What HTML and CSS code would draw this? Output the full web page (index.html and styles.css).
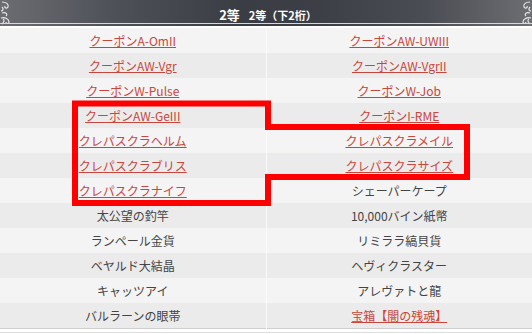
FILE: index.html
```html
<!DOCTYPE html>
<html lang="ja">
<head>
<meta charset="utf-8">
<title>2等</title>
<link rel="stylesheet" href="styles.css">
</head>
<body>
<div class="panel">
  <div class="head">
    <svg class="orn orn-left" width="16" height="26" viewBox="0 0 16 26">
      <path d="M2 2 C6 2 9 4 8 7 C7 9 4 8 5 6 M2 7 C4 9 3 11 1 11 M2 13 C6 12 8 14 6 16 M1 18 C5 17 9 19 9 22 C9 24 6 24 6 22 M2 24 C4 22 5 20 3 19" fill="none" stroke="#e8e8e8" stroke-width="1.2"/>
    </svg>
    <div class="title"><span class="main">2等</span><span class="sub">2等（下2桁）</span></div>
    <svg class="orn orn-right" width="16" height="26" viewBox="0 0 16 26">
      <path d="M14 2 C10 2 7 4 8 7 C9 9 12 8 11 6 M14 7 C12 9 13 11 15 11 M14 13 C10 12 8 14 10 16 M15 18 C11 17 7 19 7 22 C7 24 10 24 10 22 M14 24 C12 22 11 20 13 19" fill="none" stroke="#e8e8e8" stroke-width="1.2"/>
    </svg>
  </div>
  <table class="prizes">
    <tr><td><a href="#">クーポンA-OmII</a></td><td><a href="#">クーポンAW-UWIII</a></td></tr>
    <tr><td><a href="#">クーポンAW-Vgr</a></td><td><a href="#">クーポンAW-VgrII</a></td></tr>
    <tr><td><a href="#">クーポンW-Pulse</a></td><td><a href="#">クーポンW-Job</a></td></tr>
    <tr><td><a href="#">クーポンAW-GeIII</a></td><td><a href="#">クーポンI-RME</a></td></tr>
    <tr><td><a href="#">クレパスクラヘルム</a></td><td><a href="#">クレパスクラメイル</a></td></tr>
    <tr><td><a href="#">クレパスクラブリス</a></td><td><a href="#">クレパスクラサイズ</a></td></tr>
    <tr><td><a href="#">クレパスクラナイフ</a></td><td>シェーパーケープ</td></tr>
    <tr><td>太公望の釣竿</td><td>10,000バイン紙幣</td></tr>
    <tr><td>ランペール金貨</td><td>リミララ縞貝貨</td></tr>
    <tr><td>ベヤルド大結晶</td><td>ヘヴィクラスター</td></tr>
    <tr><td>キャッツアイ</td><td>アレヴァトと龍</td></tr>
    <tr><td>バルラーンの眼帯</td><td><a href="#">宝箱【闇の残魂】</a></td></tr>
  </table>
  <div class="foot"></div>
  <svg class="mark" width="532" height="334" viewBox="0 0 532 334">
    <polygon points="75,103.5 268,103.5 268,127 467,127 467,177 268,177 268,203 75,203" fill="none" stroke="#ff0000" stroke-width="6"/>
  </svg>
</div>
</body>
</html>
```
FILE: styles.css
```css
html, body {
  margin: 0;
  padding: 0;
  background: #ffffff;
}

.panel {
  position: relative;
  width: 532px;
  font-family: "Noto Sans CJK JP", "Noto Sans", sans-serif;
}

.head {
  position: relative;
  height: 26px;
  display: flex;
  align-items: center;
  justify-content: space-between;
  background: linear-gradient(90deg, #6c6d72 0%, #4e5058 22%, #3b3d45 45%, #3d3f47 60%, #4b4d54 80%, #6d6e72 100%);
}

.head::after {
  content: "";
  position: absolute;
  left: 0;
  right: 0;
  bottom: 2px;
  height: 1px;
  background: #d8d8d8;
}

.orn {
  display: block;
  flex: none;
}

.title {
  display: flex;
  align-items: baseline;
  gap: 9px;
  color: #ffffff;
  font-weight: bold;
  padding-top: 2px;
  padding-left: 4px;
}

.title .main {
  font-size: 13px;
}

.title .sub {
  font-size: 11px;
}

.prizes {
  width: 532px;
  margin-top: 2px;
  border-collapse: collapse;
  table-layout: fixed;
  font-size: 12px;
  color: #444444;
}

.prizes td {
  width: 50%;
  height: 25px;
  padding: 0;
  text-align: center;
  vertical-align: middle;
}

.prizes td + td {
  border-left: 1px solid #fafafa;
}

.prizes tr:nth-child(odd) {
  background: #f4f4f4;
}

.prizes tr:nth-child(even) {
  background: #ebebeb;
}

.prizes tr:last-child {
  border-bottom: 1px solid #cfcfcf;
}

.prizes a {
  color: #c8463c;
  text-decoration: underline;
}

.foot {
  height: 3px;
  border-bottom: 1px solid #dddddd;
}

.mark {
  position: absolute;
  left: 0;
  top: 0;
  pointer-events: none;
}
```
